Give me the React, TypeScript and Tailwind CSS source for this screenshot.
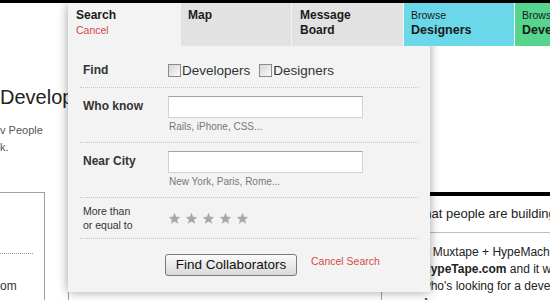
import React from 'react';

/**
 * SEARCH DROPDOWN OVER A COLLAB PAGE
 * - Black top rule, tab strip, open "Search" panel with shadow
 * - Page columns peek out around the panel
 */

function Star() {
  return (
    <svg viewBox="0 0 24 24" className="h-[13px] w-[13px] fill-[#a9a9a9]">
      <path d="M12 1.5l3 7.1 7.5.6-5.7 4.9 1.8 7.4L12 17.6l-6.6 3.9 1.8-7.4-5.7-4.9 7.5-.6z" />
    </svg>
  );
}

function Checkbox({ label }: { label: string }) {
  return (
    <label className="flex items-center gap-[1px]">
      <span className="h-[13px] w-[13px] border border-[#8c8c8c] bg-gradient-to-br from-[#d6d6d6] to-[#fbfbfb]" />
      <span className="text-[13.5px] leading-[15px] text-[#333]">{label}</span>
    </label>
  );
}

function TextField({ hint }: { hint: string }) {
  return (
    <div className="flex flex-col">
      <input
        type="text"
        className="h-[22px] w-[195px] border border-[#d2d2d2] border-t-[#a3a3a3] bg-white outline-none"
      />
      <span className="mt-[3px] pl-[1px] text-[10px] leading-[12px] text-[#777]">{hint}</span>
    </div>
  );
}

function SearchPanel() {
  return (
    <div className="absolute left-[68px] top-[3px] z-10 h-[289px] w-[362px] bg-[#f3f3f3] shadow-[0_0_10px_rgba(0,0,0,0.38)]">
      {/* Active tab */}
      <div className="h-[43px] pl-[8px] pt-[5px]">
        <div className="text-[12px] font-bold leading-[15px] text-[#1a1a1a]">Search</div>
        <a className="block text-[10.5px] leading-[15px] text-[#d24a4c]">Cancel</a>
      </div>

      <form className="px-[12px]">
        {/* Find */}
        <div className="flex items-center border-b border-dotted border-[#c6c6c6] pb-[9px] pt-[17px]">
          <span className="w-[88px] pl-[3px] text-[12px] font-bold leading-[15px] text-[#333]">Find</span>
          <div className="flex gap-[9px]">
            <Checkbox label="Developers" />
            <Checkbox label="Designers" />
          </div>
        </div>

        {/* Who know */}
        <div className="flex border-b border-dotted border-[#c6c6c6] pb-[9px] pt-[8px]">
          <span className="w-[88px] pl-[3px] pt-[3px] text-[12px] font-bold leading-[15px] text-[#333]">Who know</span>
          <TextField hint="Rails, iPhone, CSS..." />
        </div>

        {/* Near City */}
        <div className="flex border-b border-dotted border-[#c6c6c6] pb-[9px] pt-[8px]">
          <span className="w-[88px] pl-[3px] pt-[3px] text-[12px] font-bold leading-[15px] text-[#333]">Near City</span>
          <TextField hint="New York, Paris, Rome..." />
        </div>

        {/* Rating */}
        <div className="flex items-center border-b border-dotted border-[#c6c6c6] pb-[6px] pt-[6px]">
          <span className="w-[88px] pl-[3px] text-[10.5px] leading-[14px] text-[#333]">
            More than
            <br />
            or equal to
          </span>
          <div className="flex gap-[4px]">
            <Star />
            <Star />
            <Star />
            <Star />
            <Star />
          </div>
        </div>

        {/* Actions */}
        <div className="flex items-start pl-[85px] pt-[15px]">
          <button
            type="button"
            className="h-[22px] w-[132px] rounded-[3px] border border-[#7a7a7a] bg-gradient-to-b from-[#fbfbfb] to-[#d9d9d9] text-[13.5px] leading-[20px] text-[#111]"
          >
            Find Collaborators
          </button>
          <a className="ml-[14px] text-[10.5px] leading-[15px] text-[#d24a4c]">Cancel Search</a>
        </div>
      </form>
    </div>
  );
}

export default function App() {
  return (
    <div className="relative h-[300px] w-[550px] overflow-hidden bg-white font-['Liberation_Sans',Arial,sans-serif] text-[#222]">
      <div className="h-[3px] bg-black" />

      {/* Tab strip (Search tab lives in the panel) */}
      <nav className="relative z-20 flex h-[43px] gap-[1px] overflow-hidden pl-[181px]">
        <a className="w-[110px] shrink-0 bg-[#e2e2e2] pl-[7px] pt-[5px] text-[12px] font-bold leading-[15px] text-[#1a1a1a]">
          Map
        </a>
        <a className="w-[111px] shrink-0 bg-[#e2e2e2] pl-[8px] pt-[5px] text-[12px] font-bold leading-[15px] text-[#1a1a1a]">
          Message
          <br />
          Board
        </a>
        <a className="w-[110px] shrink-0 bg-[#6bd8ea] pl-[7px] pt-[5px] text-[#1a1a1a]">
          <span className="block text-[10.5px] leading-[15px]">Browse</span>
          <span className="block text-[12.5px] font-bold leading-[15px]">Designers</span>
        </a>
        <a className="w-[110px] shrink-0 whitespace-nowrap bg-[#56d58f] pl-[7px] pt-[5px] text-[#1a1a1a]">
          <span className="block text-[10.5px] leading-[15px]">Browse</span>
          <span className="block text-[12.5px] font-bold leading-[15px]">Developers</span>
        </a>
      </nav>

      {/* Page columns */}
      <div className="flex">
        <div className="w-[68px] shrink-0 whitespace-nowrap">
          <h1 className="mt-[39px] text-[20px] leading-[24px] text-[#222]">Developers</h1>
          <p className="mt-[13px] text-[11px] leading-[17px] text-[#555]">
            v People
            <br />
            k.
          </p>
          <div className="mt-[36px] h-[120px] w-[45px] border-r border-t border-[#a0a0a0]">
            <div className="h-[61px] w-[33px] border-b border-dotted border-[#999]" />
            <div className="mt-[24px] text-[12px] leading-[17px] text-[#333]">om</div>
          </div>
        </div>

        <div className="mt-[146px] h-[120px] flex-1 border-l border-[#a0a0a0]" />

        <div className="w-[169px] shrink-0 overflow-hidden whitespace-nowrap border-l border-[#a0a0a0]">
          <div className="mt-[146px] h-[4px] bg-black" />
          <h2 className="border-b border-[#bdbdbd] pb-[9px] pl-[30px] pt-[9px] text-[13px] leading-[18px] text-[#222]">
            What people are building
          </h2>
          <p className="pl-[40px] pt-[11px] text-[12px] leading-[17px] text-[#222]">
            A Muxtape + HypeMachine mashup:
            <br />
            <b>HypeTape.com</b> and it was built by
            <br />
            who's looking for a developer.
            <br />
            Awesome.
          </p>
        </div>
      </div>

      <SearchPanel />
    </div>
  );
}
